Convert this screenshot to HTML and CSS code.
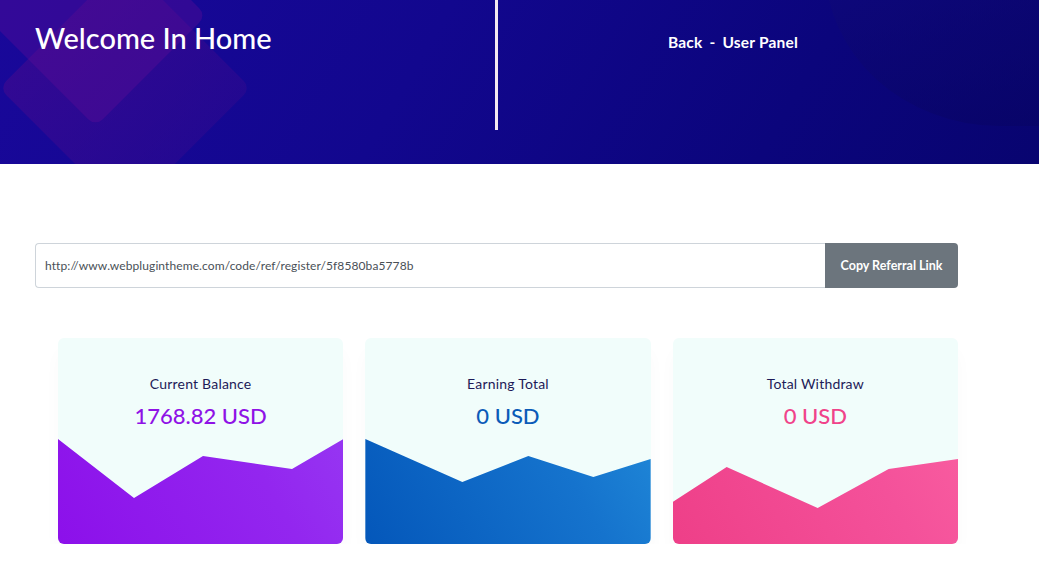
FILE: index.html
```html
<!DOCTYPE html>
<html lang="en">
<head>
<meta charset="utf-8">
<title>Welcome In Home</title>
<link rel="stylesheet" href="styles.css">
</head>
<body>
<header class="hero">
  <div class="deco deco-diamond-big"></div>
  <div class="deco deco-diamond-small"></div>
  <div class="deco deco-blob"></div>
  <div class="hero-left">
    <h1 class="hero-title">Welcome In Home</h1>
  </div>
  <div class="hero-right">
    <p class="crumb">Back <span class="sep">-</span> User Panel</p>
  </div>
</header>

<main class="content">
  <div class="ref-group">
    <input class="ref-input" type="text" value="http://www.webplugintheme.com/code/ref/register/5f8580ba5778b" readonly>
    <button class="ref-btn" type="button">Copy Referral Link</button>
  </div>

  <div class="cards">
    <div class="card card-purple">
      <div class="wave"></div>
      <p class="card-label">Current Balance</p>
      <p class="card-value">1768.82 USD</p>
    </div>
    <div class="card card-blue">
      <div class="wave"></div>
      <p class="card-label">Earning Total</p>
      <p class="card-value">0 USD</p>
    </div>
    <div class="card card-pink">
      <div class="wave"></div>
      <p class="card-label">Total Withdraw</p>
      <p class="card-value">0 USD</p>
    </div>
  </div>
</main>
</body>
</html>
```

FILE: styles.css
```css
* { box-sizing: border-box; }

html, body {
  margin: 0;
  padding: 0;
  background: #ffffff;
  font-family: "Lato", "Open Sans", "DejaVu Sans", sans-serif;
}

.hero {
  position: relative;
  height: 164px;
  overflow: hidden;
  display: flex;
  background: linear-gradient(120deg, #19089a 0%, #12078e 40%, #0b057c 75%, #080470 100%);
}

.deco {
  position: absolute;
  pointer-events: none;
}

.deco-diamond-big {
  left: 36px;
  top: -1px;
  width: 178px;
  height: 178px;
  border-radius: 10px;
  transform: rotate(45deg);
  background: linear-gradient(90deg, rgba(80, 10, 140, 0.45), rgba(70, 10, 140, 0.3));
}

.deco-diamond-small {
  left: 17px;
  top: -63px;
  width: 157px;
  height: 157px;
  border-radius: 10px;
  transform: rotate(45deg);
  background: rgba(95, 12, 150, 0.38);
}

.deco-blob {
  left: 825px;
  top: -100px;
  width: 300px;
  height: 226px;
  border-bottom-left-radius: 175px 160px;
  background: linear-gradient(160deg, rgba(20, 12, 130, 0.5), rgba(6, 3, 95, 0.55));
}

.hero-left {
  position: relative;
  width: 498px;
  height: 130px;
  border-right: 3px solid #f4e9f1;
  padding: 20px 0 0 35px;
}

.hero-title {
  margin: 0;
  color: #ffffff;
  font-size: 29px;
  font-weight: 500;
  letter-spacing: 0;
  line-height: 36px;
}

.hero-right {
  position: relative;
  flex: 1;
  padding: 32px 0 0 170px;
}

.crumb {
  margin: 0;
  color: #ffffff;
  font-size: 15.5px;
  font-weight: 700;
  line-height: 20px;
  letter-spacing: 0.2px;
}

.crumb .sep {
  margin: 0 3px;
}

.content {
  padding: 79px 0 0 35px;
  width: 958px;
}

.ref-group {
  display: flex;
  height: 45px;
}

.ref-input {
  flex: 1;
  height: 45px;
  border: 1px solid #ced4da;
  border-right: none;
  border-radius: 4px 0 0 4px;
  padding: 0 9px;
  font-family: inherit;
  font-size: 12px;
  letter-spacing: 0.1px;
  color: #495057;
  background: #ffffff;
  outline: none;
}

.ref-btn {
  width: 133px;
  height: 45px;
  border: none;
  border-radius: 0 4px 4px 0;
  background: #6c757d;
  color: #ffffff;
  font-family: inherit;
  font-size: 12.5px;
  font-weight: 700;
  padding: 0;
}

.cards {
  display: flex;
  gap: 22px;
  margin: 50px 0 0 23px;
}

.card {
  position: relative;
  flex: 1;
  height: 206px;
  border-radius: 6px;
  overflow: hidden;
  background: #f1fdfb;
  text-align: center;
  padding-top: 36px;
  box-shadow: 0 14px 18px rgba(0, 0, 0, 0.025);
}

.wave {
  position: absolute;
  inset: 0;
}

.card-purple .wave {
  background: linear-gradient(60deg, #8c10ea 0%, #9326ef 60%, #983ef4 100%);
  clip-path: polygon(0 101px, 76px 160px, 145px 118px, 234px 131px, 100% 101px, 100% 100%, 0 100%);
}

.card-blue .wave {
  background: linear-gradient(60deg, #0457ba 0%, #1573cd 60%, #2490dc 100%);
  clip-path: polygon(0 101px, 97px 144px, 163px 118px, 228px 139px, 100% 121px, 100% 100%, 0 100%);
}

.card-pink .wave {
  background: linear-gradient(60deg, #ee3f88 0%, #f4519a 60%, #fb62a3 100%);
  clip-path: polygon(0 164px, 54px 129px, 145px 170px, 216px 131px, 100% 121px, 100% 100%, 0 100%);
}

.card-label {
  position: relative;
  margin: 0;
  font-size: 14px;
  line-height: 20px;
  letter-spacing: 0.2px;
  color: #1d1a58;
}

.card-value {
  position: relative;
  margin: 8px 0 0;
  font-size: 22px;
  font-weight: 500;
  line-height: 28px;
}

.card-purple .card-value { color: #8f12e6; }
.card-blue .card-value { color: #0b5bb8; }
.card-pink .card-value { color: #f0438a; }
```
